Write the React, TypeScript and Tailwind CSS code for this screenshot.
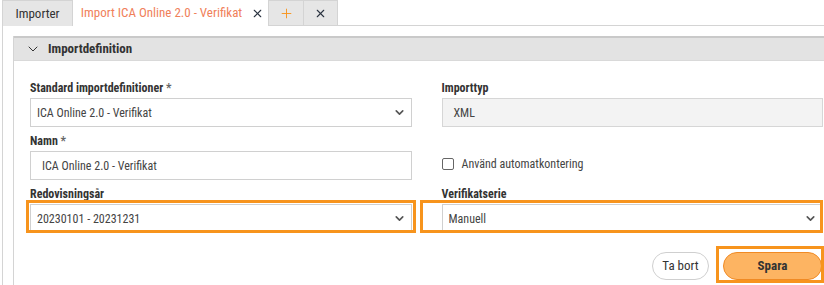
import { ChevronDown, Plus, X } from 'lucide-react'

const font = "font-['Liberation_Sans_Narrow','Roboto_Condensed','Roboto',sans-serif]"

function Field({ label, required, children }: { label: string; required?: boolean; children: React.ReactNode }) {
  return (
    <div className="flex flex-col">
      <div className="h-[17px] text-[12px] font-bold leading-[14px] text-[#333]">
        {label}
        {required && <span className="text-[#666]"> *</span>}
      </div>
      {children}
    </div>
  )
}

function Select({ value }: { value: string }) {
  return (
    <div className="flex h-[29px] items-center justify-between border border-[#d0d0d0] bg-white pl-[6px] pr-[5px] text-[12px] text-[#444]">
      <span>{value}</span>
      <ChevronDown size={13} strokeWidth={3} className="text-[#555]" />
    </div>
  )
}

export default function App() {
  return (
    <div className={`${font} relative h-[285px] w-[824px] overflow-hidden bg-white`}>
      <div className="flex h-[26px] pl-[2px]">
        <div className="flex w-[71px] items-center justify-center border border-b-0 border-[#d4d4d4] bg-[#e6e6e6] text-[13px] text-[#333]">
          Importer
        </div>
        <div className="flex w-[195px] items-center justify-center gap-[9px] bg-white pl-[4px] text-[13px] text-[#f0805a]">
          Import ICA Online 2.0 - Verifikat
          <X size={13} strokeWidth={2} className="text-[#2a3340]" />
        </div>
        <div className="flex w-[36px] items-center justify-center border border-[#d4d4d4] bg-[#e6e6e6]">
          <Plus size={15} strokeWidth={1.5} className="text-[#f7941d]" />
        </div>
        <div className="flex w-[34px] items-center justify-center border border-l-0 border-[#d4d4d4] bg-[#e6e6e6]">
          <X size={13} strokeWidth={2} className="text-[#2a3340]" />
        </div>
        <div className="flex-1 border-b border-[#d4d4d4]" />
      </div>

      <div className="ml-[2px] h-[259px] border-l border-[#d4d4d4] pl-[10px] pt-[10px]">
        <div className="h-full border-l border-[#d4d4d4]">
          <div className="flex h-[25px] items-center gap-[7px] border-t-2 border-[#c9c9c9] border-b border-b-[#d9d9d9] bg-[#e3e3e3] pl-[11px] text-[13px] font-bold text-[#333]">
            <ChevronDown size={16} strokeWidth={1.5} className="text-[#333]" />
            Importdefinition
          </div>

          <div className="pl-[16px] pr-[1px] pt-[20px]">
            <div className="grid grid-cols-2 gap-x-[30px]">
              <div className="flex flex-col gap-[7px]">
                <Field label="Standard importdefinitioner" required>
                  <Select value="ICA Online 2.0 - Verifikat" />
                </Field>
                <Field label="Namn" required>
                  <div className="flex h-[29px] items-center border border-[#d0d0d0] bg-white pl-[11px] text-[12px] text-[#444]">
                    ICA Online 2.0 - Verifikat
                  </div>
                </Field>
                <Field label="Redovisningsår">
                  <Select value="20230101 - 20231231" />
                </Field>
              </div>

              <div className="flex flex-col gap-[7px]">
                <Field label="Importtyp">
                  <div className="flex h-[29px] items-center border border-[#d6d6d6] bg-[#f3f3f3] pl-[11px] text-[12px] text-[#444]">
                    XML
                  </div>
                </Field>
                <div className="flex h-[46px] items-center gap-[8px] pt-[14px] text-[12px] text-[#444]">
                  <span className="h-[12px] w-[12px] rounded-[2px] border border-[#666] bg-white" />
                  Använd automatkontering
                </div>
                <Field label="Verifikatserie">
                  <Select value="Manuell" />
                </Field>
              </div>
            </div>

            <div className="mt-[19px] flex justify-end gap-[14px] pr-[1px]">
              <button className="h-[28px] w-[57px] rounded-full border border-[#cfcfcf] bg-white text-[13px] text-[#333]">
                Ta bort
              </button>
              <button className="h-[28px] w-[99px] rounded-full border border-[#f08a24] bg-[#fdb462] text-[13px] font-bold text-[#333]">
                Spara
              </button>
            </div>
          </div>
        </div>
      </div>

      <div className="pointer-events-none absolute left-[26px] top-[200px] h-[33px] w-[390px] border-[3px] border-[#f7941d]" />
      <div className="pointer-events-none absolute left-[420px] top-[200px] h-[33px] w-[403px] border-[3px] border-[#f7941d]" />
      <div className="pointer-events-none absolute left-[716px] top-[246px] h-[37px] w-[108px] border-[3px] border-[#f7941d]" />
    </div>
  )
}
